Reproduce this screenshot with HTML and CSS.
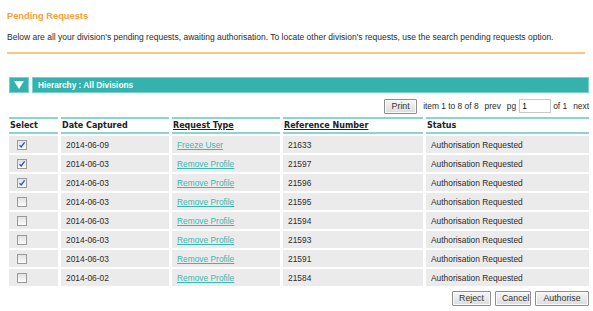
FILE: index.html
```html
<!DOCTYPE html>
<html lang="en">
<head>
    <meta charset="UTF-8">
    <title>Pending Requests</title>
    <link rel="stylesheet" href="styles.css">
</head>
<body>
    <h1 class="title">Pending Requests</h1>
    <p class="intro">Below are all your division's pending requests, awaiting authorisation. To locate other division's requests, use the search pending requests option.</p>
    <div class="divider"></div>

    <div class="hierarchy">
        <div class="toggle">
            <svg width="10" height="8" viewBox="0 0 10 8"><polygon points="0,0 10,0 5,8" fill="#fff"/></svg>
        </div>
        <div class="hierarchy-label">Hierarchy : All Divisions</div>
    </div>

    <div class="toolbar">
        <button class="btn">Print</button>
        <span class="pager">item 1 to 8 of 8</span>
        <span class="pager">prev</span>
        <span class="pager">pg</span>
        <input class="page-input" type="text" value="1">
        <span class="pager">of 1</span>
        <span class="pager">next</span>
    </div>

    <table class="requests">
        <colgroup>
            <col class="c-select">
            <col class="c-date">
            <col class="c-type">
            <col class="c-ref">
            <col class="c-status">
        </colgroup>
        <thead>
            <tr>
                <th>Select</th>
                <th>Date Captured</th>
                <th><u>Request Type</u></th>
                <th><u>Reference Number</u></th>
                <th>Status</th>
            </tr>
        </thead>
        <tbody>
            <tr>
                <td class="sel"><span class="check on"><svg width="8" height="8" viewBox="0 0 8 8"><path d="M1.5 4.2 L3.2 6 L6.6 1.4" stroke="#2a4fc0" stroke-width="1.3" fill="none"/></svg></span></td>
                <td>2014-06-09</td>
                <td><a href="#">Freeze User</a></td>
                <td>21633</td>
                <td>Authorisation Requested</td>
            </tr>
            <tr>
                <td class="sel"><span class="check on"><svg width="8" height="8" viewBox="0 0 8 8"><path d="M1.5 4.2 L3.2 6 L6.6 1.4" stroke="#2a4fc0" stroke-width="1.3" fill="none"/></svg></span></td>
                <td>2014-06-03</td>
                <td><a href="#">Remove Profile</a></td>
                <td>21597</td>
                <td>Authorisation Requested</td>
            </tr>
            <tr>
                <td class="sel"><span class="check on"><svg width="8" height="8" viewBox="0 0 8 8"><path d="M1.5 4.2 L3.2 6 L6.6 1.4" stroke="#2a4fc0" stroke-width="1.3" fill="none"/></svg></span></td>
                <td>2014-06-03</td>
                <td><a href="#">Remove Profile</a></td>
                <td>21596</td>
                <td>Authorisation Requested</td>
            </tr>
            <tr>
                <td class="sel"><span class="check"></span></td>
                <td>2014-06-03</td>
                <td><a href="#">Remove Profile</a></td>
                <td>21595</td>
                <td>Authorisation Requested</td>
            </tr>
            <tr>
                <td class="sel"><span class="check"></span></td>
                <td>2014-06-03</td>
                <td><a href="#">Remove Profile</a></td>
                <td>21594</td>
                <td>Authorisation Requested</td>
            </tr>
            <tr>
                <td class="sel"><span class="check"></span></td>
                <td>2014-06-03</td>
                <td><a href="#">Remove Profile</a></td>
                <td>21593</td>
                <td>Authorisation Requested</td>
            </tr>
            <tr>
                <td class="sel"><span class="check"></span></td>
                <td>2014-06-03</td>
                <td><a href="#">Remove Profile</a></td>
                <td>21591</td>
                <td>Authorisation Requested</td>
            </tr>
            <tr>
                <td class="sel"><span class="check"></span></td>
                <td>2014-06-02</td>
                <td><a href="#">Remove Profile</a></td>
                <td>21584</td>
                <td>Authorisation Requested</td>
            </tr>
        </tbody>
    </table>

    <div class="actions">
        <button class="btn btn-reject">Reject</button>
        <button class="btn btn-cancel">Cancel</button>
        <button class="btn btn-auth">Authorise</button>
    </div>
</body>
</html>
```

FILE: styles.css
```css
body {
    font-family: "Liberation Sans", Arial, sans-serif;
    font-size: 8px;
    color: #333;
    margin: 0;
    padding: 10px 4px 0 7px;
    background: #fff;
}
.title {
    font-size: 9.3px;
    line-height: 12px;
    font-weight: bold;
    color: #f7a033;
    margin: 0;
}
.intro {
    margin: 10px 0 0;
    line-height: 10px;
    font-size: 8.5px;
    color: #2b2b2b;
}
.divider {
    margin: 10px 4px 0 0;
    height: 2px;
    background: #fdc67c;
}
.hierarchy {
    display: flex;
    gap: 3px;
    margin: 23px 0 0 2px;
    height: 16px;
}
.toggle {
    width: 20px;
    background: #35b2ad;
    border: 1px solid #7ccfcb;
    box-sizing: border-box;
    display: flex;
    align-items: center;
    justify-content: center;
}
.hierarchy-label {
    flex: 1;
    background: #35b2ad;
    border: 1px solid #7ccfcb;
    box-sizing: border-box;
    color: #fff;
    font-weight: bold;
    font-size: 8.3px;
    line-height: 14px;
    padding-left: 5px;
}
.toolbar {
    display: flex;
    justify-content: flex-end;
    align-items: center;
    gap: 6px;
    margin-top: 6px;
    height: 14px;
}
.pager {
    font-size: 8.4px;
    color: #2b2b2b;
}
.page-input {
    width: 32px;
    height: 14px;
    box-sizing: border-box;
    border: 1px solid #c8c8c8;
    font-family: "Liberation Sans", Arial, sans-serif;
    font-size: 8.4px;
    padding: 0 2px;
    margin: 0 -4px 0 -3px;
}
.btn {
    font-family: "Liberation Sans", Arial, sans-serif;
    font-size: 8.8px;
    color: #333;
    height: 15px;
    padding: 0 6px;
    border: 1px solid #8e8e8e;
    border-radius: 1px;
    background: linear-gradient(#f6f6f6, #dcdcdc);
    box-shadow: inset 0 0 0 1px #fafafa;
    line-height: 13px;
    cursor: pointer;
}
.toolbar .btn {
    width: 33px;
    padding: 0;
}
.requests {
    table-layout: fixed;
    width: calc(100% + 4px);
    margin: 2px 0 0 -1px;
    border-spacing: 3px 2px;
}
.c-select { width: 49px; }
.c-date { width: 108px; }
.c-type { width: 108px; }
.c-ref { width: 140px; }
.requests th {
    font-family: "DejaVu Sans", Verdana, sans-serif;
    font-size: 8px;
    font-weight: bold;
    color: #222;
    text-align: left;
    height: 13px;
    padding: 0 0 0 1px;
    border-top: 2px solid #8bd4d0;
    border-bottom: 2px solid #8bd4d0;
}
.requests td {
    background: #ebebeb;
    height: 17px;
    padding: 0 0 0 5px;
    font-size: 8.4px;
    color: #2b2b2b;
}
.requests td.sel {
    padding-left: 8px;
}
.requests a {
    color: #3cb8b2;
    text-decoration: underline;
}
.check {
    display: flex;
    align-items: center;
    justify-content: center;
    width: 10px;
    height: 10px;
    box-sizing: border-box;
    border: 1px solid #9a9a9a;
    background: linear-gradient(#e2e2e2, #fbfbfb);
}
.actions {
    display: flex;
    justify-content: flex-end;
    gap: 4px;
    margin-top: 3px;
}
.btn-reject { width: 39px; }
.btn-cancel { width: 36px; }
.btn-auth { width: 54px; }
```
